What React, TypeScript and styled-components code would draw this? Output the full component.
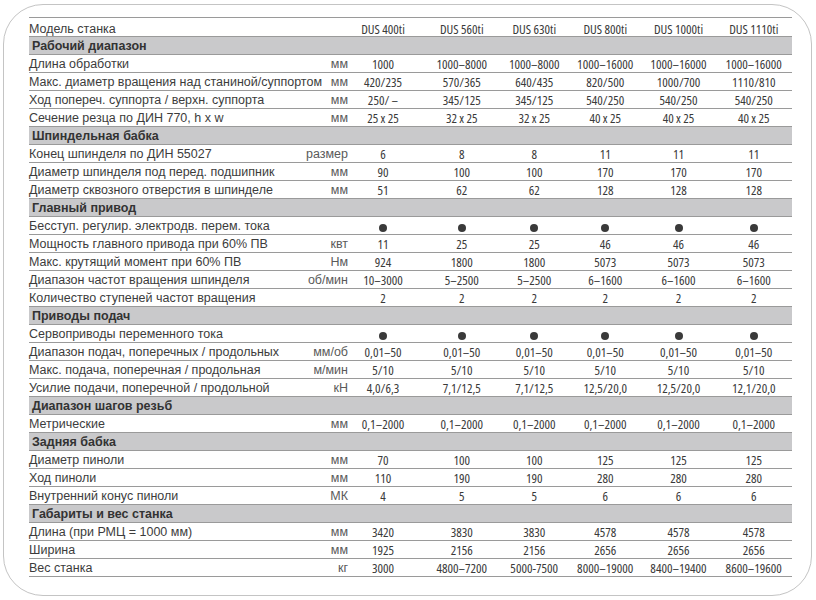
import React from "react";
import styled, { createGlobalStyle } from "styled-components";

const GlobalStyle = createGlobalStyle`
	html, body {
		margin: 0;
		padding: 0;
		background: #ffffff;
	}
`;

const COLS = "319px 76px 75.5px 69.5px 72.5px 74px 76.5px";

const Card = styled.div`
	box-sizing: border-box;
	width: 809px;
	height: 592px;
	margin: 4px 4px 4px 3px;
	border: 1px solid #c4c4c4;
	border-radius: 40px;
	padding: 12px 19px 0 25px;
	background: #ffffff;
`;

const Table = styled.div`
	display: flex;
	flex-direction: column;
	border-top: 1px solid #9a9a9a;
	color: #3c3c3c;
`;

const Row = styled.div<{ $head?: boolean }>`
	display: grid;
	grid-template-columns: ${COLS};
	height: ${p => (p.$head ? "19px" : "18px")};
	padding-top: ${p => (p.$head ? "2px" : "0")};
	box-sizing: border-box;
	border-bottom: 1px solid #9a9a9a;
`;

const Band = styled.div`
	height: 18px;
	box-sizing: border-box;
	border-bottom: 1px solid #9a9a9a;
	background: #c9c9cb;
	padding: 1px 0 0 3px;
	font-family: "Liberation Sans", Arial, sans-serif;
	font-weight: bold;
	font-size: 12.5px;
	line-height: 16px;
	color: #333333;
`;

const LabelCell = styled.div`
	display: flex;
	justify-content: space-between;
	font-family: "Liberation Sans", Arial, sans-serif;
	font-size: 12.5px;
	line-height: 17px;
	padding-top: 1px;
	white-space: nowrap;
`;

const Unit = styled.span`
	color: #5a5a5a;
`;

const Value = styled.div<{ $first?: boolean }>`
	text-align: center;
	font-family: "Open Sans", Lato, sans-serif;
	font-stretch: 80%;
	font-size: 13px;
	line-height: 17px;
	padding-top: 1px;
	padding-right: ${p => (p.$first ? "6px" : "0")};
	white-space: nowrap;
	color: #3a3a3a;
`;

const Dot = styled.span`
	display: inline-block;
	width: 8px;
	height: 8px;
	border-radius: 50%;
	background: #3a3a3a;
	vertical-align: -1px;
`;

type Line = { label: string; unit?: string; values: string[] };
type Section = { title: string; rows: Line[] };

const B = "●";

const models = ["DUS 400ti", "DUS 560ti", "DUS 630ti", "DUS 800ti", "DUS 1000ti", "DUS 1110ti"];

const sections: Section[] = [
	{
		title: "Рабочий диапазон",
		rows: [
			{ label: "Длина обработки", unit: "мм", values: ["1000", "1000–8000", "1000–8000", "1000–16000", "1000–16000", "1000–16000"] },
			{ label: "Макс. диаметр вращения над станиной/суппортом", unit: "мм", values: ["420/235", "570/365", "640/435", "820/500", "1000/700", "1110/810"] },
			{ label: "Ход попереч. суппорта / верхн. суппорта", unit: "мм", values: ["250/ –", "345/125", "345/125", "540/250", "540/250", "540/250"] },
			{ label: "Сечение резца по ДИН 770, h x w", unit: "мм", values: ["25 x 25", "32 x 25", "32 x 25", "40 x 25", "40 x 25", "40 x 25"] },
		],
	},
	{
		title: "Шпиндельная бабка",
		rows: [
			{ label: "Конец шпинделя по ДИН 55027", unit: "размер", values: ["6", "8", "8", "11", "11", "11"] },
			{ label: "Диаметр шпинделя под перед. подшипник", unit: "мм", values: ["90", "100", "100", "170", "170", "170"] },
			{ label: "Диаметр сквозного отверстия в шпинделе", unit: "мм", values: ["51", "62", "62", "128", "128", "128"] },
		],
	},
	{
		title: "Главный привод",
		rows: [
			{ label: "Бесступ. регулир. электродв. перем. тока", values: [B, B, B, B, B, B] },
			{ label: "Мощность главного привода при 60% ПВ", unit: "квт", values: ["11", "25", "25", "46", "46", "46"] },
			{ label: "Макс. крутящий момент при 60% ПВ", unit: "Нм", values: ["924", "1800", "1800", "5073", "5073", "5073"] },
			{ label: "Диапазон частот вращения шпинделя", unit: "об/мин", values: ["10–3000", "5–2500", "5–2500", "6–1600", "6–1600", "6–1600"] },
			{ label: "Количество ступеней частот вращения", values: ["2", "2", "2", "2", "2", "2"] },
		],
	},
	{
		title: "Приводы подач",
		rows: [
			{ label: "Сервоприводы переменного тока", values: [B, B, B, B, B, B] },
			{ label: "Диапазон подач, поперечных / продольных", unit: "мм/об", values: ["0,01–50", "0,01–50", "0,01–50", "0,01–50", "0,01–50", "0,01–50"] },
			{ label: "Макс. подача, поперечная / продольная", unit: "м/мин", values: ["5/10", "5/10", "5/10", "5/10", "5/10", "5/10"] },
			{ label: "Усилие подачи, поперечной / продольной", unit: "кН", values: ["4,0/6,3", "7,1/12,5", "7,1/12,5", "12,5/20,0", "12,5/20,0", "12,1/20,0"] },
		],
	},
	{
		title: "Диапазон шагов резьб",
		rows: [
			{ label: "Метрические", unit: "мм", values: ["0,1–2000", "0,1–2000", "0,1–2000", "0,1–2000", "0,1–2000", "0,1–2000"] },
		],
	},
	{
		title: "Задняя бабка",
		rows: [
			{ label: "Диаметр пиноли", unit: "мм", values: ["70", "100", "100", "125", "125", "125"] },
			{ label: "Ход пиноли", unit: "мм", values: ["110", "190", "190", "280", "280", "280"] },
			{ label: "Внутренний конус пиноли", unit: "МК", values: ["4", "5", "5", "6", "6", "6"] },
		],
	},
	{
		title: "Габариты и вес станка",
		rows: [
			{ label: "Длина (при РМЦ = 1000 мм)", unit: "мм", values: ["3420", "3830", "3830", "4578", "4578", "4578"] },
			{ label: "Ширина", unit: "мм", values: ["1925", "2156", "2156", "2656", "2656", "2656"] },
			{ label: "Вес станка", unit: "кг", values: ["3000", "4800–7200", "5000-7500", "8000–19000", "8400–19400", "8600–19600"] },
		],
	},
];

const App = () => {
	return (
		<>
			<GlobalStyle />
			<Card>
				<Table>
					<Row $head>
						<LabelCell>Модель станка</LabelCell>
						{models.map((m, i) => (
							<Value key={m} $first={i === 0}>{m}</Value>
						))}
					</Row>
					{sections.map(section => (
						<React.Fragment key={section.title}>
							<Band>{section.title}</Band>
							{section.rows.map(row => (
								<Row key={row.label}>
									<LabelCell>
										<span>{row.label}</span>
										<Unit>{row.unit}</Unit>
									</LabelCell>
									{row.values.map((v, i) => (
										<Value key={i} $first={i === 0}>
											{v === B ? <Dot /> : v}
										</Value>
									))}
								</Row>
							))}
						</React.Fragment>
					))}
				</Table>
			</Card>
		</>
	);
};

export default App;
